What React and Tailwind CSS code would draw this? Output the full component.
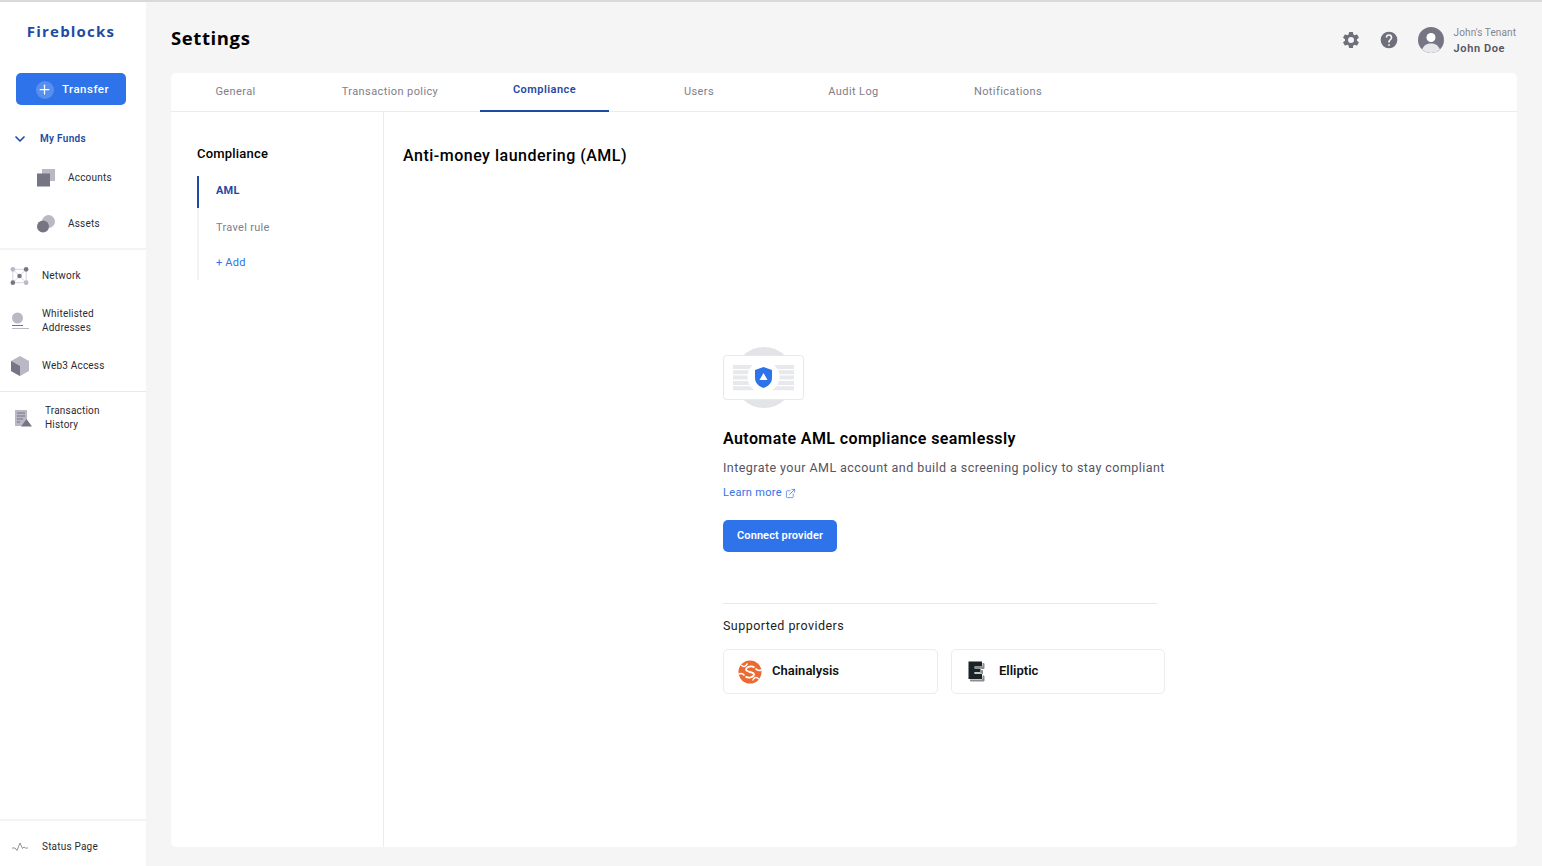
import React from 'react';
import { ChevronDown, Plus, ExternalLink } from 'lucide-react';

const TABS = ['General', 'Transaction policy', 'Compliance', 'Users', 'Audit Log', 'Notifications'];

const AccountsIcon = () => (
  <svg width="18" height="18" viewBox="0 0 18 18">
    <rect x="5" y="0" width="13" height="12" fill="#b9b8c4" />
    <rect x="0" y="4.500" width="13" height="13" fill="#767583" />
  </svg>
);

const AssetsIcon = () => (
  <svg width="18" height="18" viewBox="0 0 18 18">
    <circle cx="11.500" cy="6.500" r="6.500" fill="#b9b8c4" />
    <circle cx="6" cy="11.500" r="6" fill="#767583" />
  </svg>
);

const NetworkIcon = () => (
  <svg width="20" height="20" viewBox="0 0 20 20">
    <path d="M3 3H17V17H3Z M3 17L10 10 M3 3L10 10 M17 17L10 10 M17 3L10 10" fill="none" stroke="#c9c8d2" strokeWidth="0.8" />
    <circle cx="3" cy="3" r="2.400" fill="#b9b8c4" />
    <circle cx="17" cy="3" r="2.400" fill="#767583" />
    <circle cx="3" cy="17" r="2.400" fill="#767583" />
    <circle cx="17" cy="17" r="2.400" fill="#b9b8c4" />
    <circle cx="10" cy="10" r="2.400" fill="#767583" />
  </svg>
);

const WhitelistIcon = () => (
  <svg width="18" height="18" viewBox="0 0 18 18">
    <circle cx="6.500" cy="6" r="5.500" fill="#b9b8c4" />
    <rect x="1" y="13" width="11" height="1" fill="#767583" />
    <rect x="1" y="16" width="17" height="1" fill="#b9b8c4" />
  </svg>
);

const CubeIcon = () => (
  <svg width="18" height="20" viewBox="0 0 18 20">
    <path d="M9 0L18 5V15L9 20L0 15V5Z" fill="#b9b8c4" />
    <path d="M0 5L9 10V20L0 15Z" fill="#767583" />
  </svg>
);

const HistoryIcon = () => (
  <svg width="18" height="17" viewBox="0 0 18 17">
    <path d="M0 0H12V9L7 16H0Z" fill="#b9b8c4" />
    <path d="M2 3H10M2 6H10M2 9H8M2 12H5" stroke="#767583" strokeWidth="1" />
    <path d="M11.500 9L17 16.500H6Z" fill="#767583" />
  </svg>
);

const PulseIcon = () => (
  <svg width="16" height="10" viewBox="0 0 16 10">
    <path d="M0 6H3L5 8.500L8 1L10.500 6.500L12 5L13.500 6H16" fill="none" stroke="#767583" strokeWidth="0.8" />
  </svg>
);

const GearIcon = () => (
  <svg width="20" height="20" viewBox="0 0 24 24" fill="#6f6e7b">
    <path d="M19.140 12.940c.04-.3.06-.61.06-.94s-.02-.64-.07-.94l2.030-1.580a.5.5 0 0 0 .12-.64l-1.920-3.320a.5.5 0 0 0-.6-.22l-2.390.96a7 7 0 0 0-1.620-.94l-.36-2.540a.5.5 0 0 0-.49-.42h-3.840a.5.5 0 0 0-.48.42l-.36 2.540c-.59.24-1.130.56-1.620.94l-2.390-.96a.5.5 0 0 0-.6.22L2.680 8.840a.5.5 0 0 0 .12.64l2.030 1.580c-.05.3-.08.63-.08.94s.02.64.07.94l-2.030 1.580a.5.5 0 0 0-.12.64l1.920 3.320c.13.22.38.29.6.22l2.390-.96c.5.38 1.030.7 1.620.94l.36 2.540c.05.24.24.42.48.42h3.840c.24 0 .44-.18.47-.42l.36-2.540c.59-.24 1.130-.56 1.620-.94l2.390.96c.22.08.47 0 .6-.22l1.920-3.320a.5.5 0 0 0-.12-.64zM12 15.600A3.600 3.600 0 1 1 12 8.400a3.600 3.600 0 0 1 0 7.200z" />
  </svg>
);

const HelpIcon = () => (
  <svg width="20" height="20" viewBox="0 0 24 24" fill="#6f6e7b">
    <path d="M12 2a10 10 0 1 0 0 20 10 10 0 0 0 0-20zm1 17h-2v-2h2zm2.070-7.750l-.9.92C13.450 12.900 13 13.500 13 15h-2v-.5c0-1.100.45-2.100 1.170-2.830l1.240-1.260A2 2 0 1 0 10 9H8a4 4 0 1 1 8 0c0 .88-.36 1.680-.93 2.250z" />
  </svg>
);

const Avatar = () => (
  <svg width="26" height="26" viewBox="0 0 26 26">
    <circle cx="13" cy="13" r="13" fill="#767583" />
    <circle cx="13" cy="10.500" r="4.500" fill="#fff" />
    <path d="M4 22.400c2-4.500 5-6 9-6s7 1.500 9 6a13 13 0 0 1-18 0z" fill="#e6e7eb" />
  </svg>
);

const AmlIllustration = () => (
  <svg width="82" height="62" viewBox="0 0 82 62">
    <circle cx="41" cy="30.500" r="30.500" fill="#e3e4e8" />
    <rect x="0.500" y="8.500" width="80" height="44" rx="3" fill="#fff" stroke="#e6e7ef" />
    <path d="M10 20H71M10 25.300H71M10 30.600H71M10 35.900H71M10 41.200H71" stroke="#e8e9ec" strokeWidth="4" />
    <circle cx="40.500" cy="30" r="16" fill="#fff" />
    <path d="M40.500 20L49 23V31C49 36 45 39.500 40.500 41C36 39.500 32 36 32 31V23Z" fill="#2f73ea" />
    <path d="M40.500 26L44.500 33H36.500Z" fill="#fff" />
  </svg>
);

const ChainalysisLogo = () => (
  <svg width="24" height="24" viewBox="0 0 24 24">
    <circle cx="12" cy="12" r="11.500" fill="#ea6a32" />
    <path d="M16.500 7.500C13.500 5.500 8.500 6.500 8 9.500C7.500 12.500 16.500 11.500 16 14.500C15.500 17.500 10.500 18.500 7.500 16.500" fill="none" stroke="#fff" strokeWidth="1.800" />
    <path d="M3 5C5.500 7.500 7.500 7 9.500 3.500M21 19C18.500 16.500 16.500 17 14.500 20.500M.5 14C3 13 5 13.500 6.500 15.500M23.500 10C21 11 19 10.500 17.500 8.500" fill="none" stroke="#fff" strokeWidth="1.500" />
  </svg>
);

const E_PATH = 'M.5 .5H14V5.500H6.500V7.500H12.500V11H6.500V13H14V18H.5Z';

const EllipticLogo = () => (
  <svg width="18" height="21" viewBox="0 0 18 21">
    <path d={E_PATH} transform="translate(2 2)" fill="#8d8d8d" stroke="#8d8d8d" strokeWidth="1" />
    <path d={E_PATH} fill="#1a2326" stroke="#fff" strokeWidth="1" paintOrder="stroke" />
  </svg>
);

function NavItem({ icon, children, pl = 'pl-[10px]', gap = 'gap-[13px]', className = '' }) {
  return (
    <div className={`flex items-center ${pl} ${gap} ${className}`}>
      <span className="flex w-[19px] shrink-0 justify-center">{icon}</span>
      <span className="text-[10px] leading-[14px] tracking-[0.200px] text-[#2b2b33]">{children}</span>
    </div>
  );
}

function Sidebar() {
  return (
    <aside className="flex h-full w-[146px] shrink-0 flex-col bg-white">
      <div className="pt-[19px] pr-[4px] text-center font-['Open_Sans',sans-serif] text-[15px] leading-[20px] font-bold tracking-[1.200px] text-[#1f4aa3]">
        Fireblocks
      </div>
      <div className="px-4 pt-[32px]">
        <button className="flex h-[32px] w-[110px] items-center justify-center gap-[8px] rounded-[5px] bg-[#2f73ea] pt-[1px] pl-[3px] text-[11.500px] font-medium tracking-[0.500px] text-white">
          <span className="flex h-[18px] w-[18px] items-center justify-center rounded-full bg-white/20">
            <Plus size={15} strokeWidth={2} />
          </span>
          Transfer
        </button>
      </div>
      <div className="flex items-center pt-[26px] pl-[12px]">
        <ChevronDown size={16} strokeWidth={2.500} className="text-[#1f4aa3]" />
        <span className="pl-[12px] text-[10px] leading-[14px] font-semibold tracking-[0.300px] text-[#1f4aa3]">My Funds</span>
      </div>
      <NavItem icon={<AccountsIcon />} pl="pl-[36px]" className="pt-[22px]">Accounts</NavItem>
      <NavItem icon={<AssetsIcon />} pl="pl-[36px]" className="pt-[28px] pb-[15px]">Assets</NavItem>
      <div className="border-t-2 border-[#f3f3f5]" />
      <NavItem icon={<NetworkIcon />} className="pt-[16px]">Network</NavItem>
      <NavItem icon={<WhitelistIcon />} className="pt-[21px]">Whitelisted<br />Addresses</NavItem>
      <NavItem icon={<CubeIcon />} className="pt-[21px] pb-[15px]">Web3 Access</NavItem>
      <div className="border-t border-[#e8e8ec]" />
      <NavItem icon={<HistoryIcon />} pl="pl-[14px]" gap="gap-[12px]" className="pt-[12px]">Transaction<br />History</NavItem>
      <div className="mt-auto border-t-2 border-[#f3f3f5]" />
      <NavItem icon={<PulseIcon />} className="h-[45px] pt-[7px]">Status Page</NavItem>
    </aside>
  );
}

function Header() {
  return (
    <header className="flex h-[71px] shrink-0 items-center justify-between pr-px pl-[25px]">
      <h1 className="font-['Open_Sans',sans-serif] text-[18.500px] font-bold tracking-[0.600px] text-black">Settings</h1>
      <div className="mt-[5px] flex items-center">
        <GearIcon />
        <span className="ml-[18px]"><HelpIcon /></span>
        <span className="ml-[19px]"><Avatar /></span>
        <div className="ml-[10px] flex flex-col pt-[2px]">
          <span className="text-[10px] leading-[14px] tracking-[0.100px] text-[#85848f]">John's Tenant</span>
          <span className="pt-[2px] text-[11px] leading-[14px] font-semibold tracking-[0.600px] text-[#55545f]">John Doe</span>
        </div>
      </div>
    </header>
  );
}

function Tabs() {
  return (
    <div className="flex h-[39px] shrink-0 gap-[25.500px] border-b border-[#ececef]">
      {TABS.map((t) =>
        t === 'Compliance' ? (
          <div key={t} className="-mb-px flex w-[129px] justify-center border-b-2 border-[#1f4aa3] pt-[10px] text-[11px] leading-[14px] font-semibold tracking-[0.450px] text-[#1f4aa3]">
            {t}
          </div>
        ) : (
          <div key={t} className="flex w-[129px] justify-center pt-[12px] text-[11px] leading-[14px] tracking-[0.400px] text-[#7f7e8a]">
            {t}
          </div>
        )
      )}
    </div>
  );
}

function SubNav() {
  return (
    <div className="w-[213px] shrink-0 border-r border-[#ececef] pt-[33px] pl-[26px]">
      <div className="text-[13px] leading-[18px] font-medium tracking-[0.200px] text-black">Compliance</div>
      <div className="mt-[13px] border-l-2 border-[#f3f3f5]">
        <div className="-ml-[2px] flex h-[32px] items-center border-l-[2px] border-[#1f4aa3] pb-[1px] pl-[17px] text-[11px] font-bold tracking-[0.200px] text-[#1f4aa3]">
          AML
        </div>
        <div className="pt-[13px] pl-[17px] text-[11px] leading-[14px] tracking-[0.300px] text-[#7f7e8a]">Travel rule</div>
        <div className="pt-[21px] pb-[10px] pl-[17px] text-[11px] leading-[14px] tracking-[0.200px] text-[#2f73ea]">+ Add</div>
      </div>
    </div>
  );
}

function ProviderCard({ logo, name, pl, width }) {
  return (
    <div className={`flex h-[45px] items-center rounded-[5px] border border-[#ececef] ${width} ${pl}`}>
      {logo}
      <span className="pb-px text-[13px] font-semibold text-[#111]">{name}</span>
    </div>
  );
}

function AmlPanel() {
  return (
    <div className="flex min-w-0 flex-1 flex-col pl-[19px]">
      <h2 className="pt-[33px] text-[16px] leading-[22px] font-medium tracking-[0.500px] text-black">Anti-money laundering (AML)</h2>
      <div className="pt-[180px] pl-[320px]">
        <AmlIllustration />
        <div className="pt-[19px] text-[16px] leading-[22px] font-semibold tracking-[0.400px] text-black">Automate AML compliance seamlessly</div>
        <div className="pt-[9px] text-[12.500px] leading-[18px] tracking-[0.440px] text-[#55545f]">Integrate your AML account and build a screening policy to stay compliant</div>
        <div className="flex items-center gap-[3px] pt-[8px] text-[11px] leading-[16px] tracking-[0.320px] text-[#2f73ea]">
          Learn more <ExternalLink size={11} strokeWidth={1.500} />
        </div>
        <button className="mt-[19px] h-[32px] w-[114px] rounded-[5px] bg-[#2f73ea] text-[11px] font-semibold tracking-[0.100px] text-white">Connect provider</button>
        <div className="mt-[51px] w-[434px] border-t border-[#e8e8ec]" />
        <div className="pt-[14px] text-[12.500px] leading-[16px] tracking-[0.450px] text-[#222]">Supported providers</div>
        <div className="flex gap-[13px] pt-[15px]">
          <ProviderCard logo={<span className="mr-[10px]"><ChainalysisLogo /></span>} name="Chainalysis" pl="pl-[14px]" width="w-[215px]" />
          <ProviderCard logo={<span className="mr-[13px]"><EllipticLogo /></span>} name="Elliptic" pl="pl-[16px]" width="w-[214px]" />
        </div>
      </div>
    </div>
  );
}

export default function App() {
  return (
    <div className="flex h-[866px] w-[1542px] flex-col overflow-hidden bg-[#f5f5f6] font-['Roboto',sans-serif]">
      <div className="h-[2px] shrink-0 bg-[#d9d9d9]" />
      <div className="flex min-h-0 flex-1">
        <Sidebar />
        <main className="flex min-w-0 flex-1 flex-col pr-[25px] pb-[19px]">
          <Header />
          <div className="ml-[25px] flex min-h-0 flex-1 flex-col rounded-[5px] bg-white">
            <Tabs />
            <div className="flex min-h-0 flex-1">
              <SubNav />
              <AmlPanel />
            </div>
          </div>
        </main>
      </div>
    </div>
  );
}
